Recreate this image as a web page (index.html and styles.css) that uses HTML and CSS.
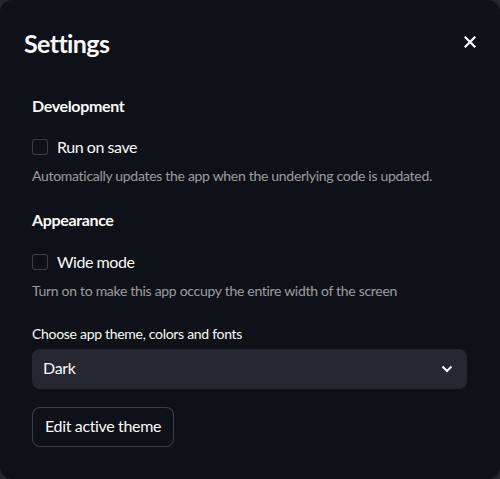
FILE: index.html
```html
<!DOCTYPE html>
<html>
<head>
<meta charset="utf-8">
<link rel="stylesheet" href="styles.css">
</head>
<body>
<div class="dialog">
  <div class="header">
    <h2 class="title">Settings</h2>
    <button class="close" aria-label="Close">
      <svg width="12" height="12" viewBox="0 0 12 12"><path d="M1.5 1.5 L10.5 10.5 M10.5 1.5 L1.5 10.5" stroke="#fafafa" stroke-width="2.2" stroke-linecap="square"/></svg>
    </button>
  </div>
  <div class="content">
    <div class="section-title first">Development</div>
    <label class="check"><span class="box"></span><span>Run on save</span></label>
    <div class="caption">Automatically updates the app when the underlying code is updated.</div>
    <div class="section-title second">Appearance</div>
    <label class="check wide"><span class="box"></span><span>Wide mode</span></label>
    <div class="caption">Turn on to make this app occupy the entire width of the screen</div>
    <div class="field-label">Choose app theme, colors and fonts</div>
    <div class="select">
      <span>Dark</span>
      <svg width="12" height="8" viewBox="0 0 12 8"><path d="M1.5 1.5 L6 6 L10.5 1.5" fill="none" stroke="#fafafa" stroke-width="2"/></svg>
    </div>
    <button class="btn">Edit active theme</button>
  </div>
</div>
</body>
</html>
```
FILE: styles.css
```css
* { box-sizing: border-box; }
html, body { margin: 0; padding: 0; }
body {
  background: #26272c;
  width: 500px;
  height: 479px;
  font-family: Lato, "Source Sans Pro", "Noto Sans", sans-serif;
  color: #fafafa;
}
.dialog {
  width: 500px;
  height: 479px;
  background: #0e1117;
  border-radius: 12px;
  overflow: hidden;
}
.header {
  display: flex;
  align-items: center;
  justify-content: space-between;
  padding: 24px 24px 0 24px;
}
.title {
  margin: 0;
  font-size: 25px;
  font-weight: 700;
  line-height: 38px;
  letter-spacing: -0.6px;
}
.close {
  background: none;
  border: none;
  padding: 0;
  width: 24px;
  height: 24px;
  display: flex;
  align-items: center;
  justify-content: center;
  margin-right: -6px;
  margin-top: -2px;
}
.content {
  padding: 0 33px 0 32px;
  display: flex;
  flex-direction: column;
  align-items: flex-start;
}
.section-title {
  font-size: 16px;
  font-weight: 700;
  line-height: 24px;
  letter-spacing: -0.35px;
}
.section-title.first { margin-top: 32px; }
.section-title.second { margin-top: 22px; }
.check {
  display: flex;
  align-items: center;
  gap: 9px;
  font-size: 16px;
  line-height: 24px;
  letter-spacing: -0.45px;
  margin-top: 17px;
}
.check.wide { margin-top: 18px; }
.box {
  width: 16px;
  height: 16px;
  border: 1px solid rgba(250, 250, 250, 0.2);
  border-radius: 3px;
}
.caption {
  font-size: 14px;
  line-height: 20px;
  letter-spacing: -0.3px;
  color: rgba(250, 250, 250, 0.6);
  margin-top: 7px;
}
.field-label {
  font-size: 14px;
  line-height: 20px;
  letter-spacing: -0.3px;
  margin-top: 23px;
}
.select {
  margin-top: 5px;
  width: 100%;
  height: 40px;
  background: #262730;
  border-radius: 8px;
  display: flex;
  align-items: center;
  justify-content: space-between;
  padding: 0 14px 0 11px;
  font-size: 16px;
  letter-spacing: -0.3px;
}
.select span { margin-top: -3px; }
.btn {
  margin-top: 18px;
  height: 40px;
  padding: 0 12px 3px 12px;
  background: #0e1117;
  color: #fafafa;
  border: 1px solid rgba(250, 250, 250, 0.2);
  border-radius: 8px;
  font-family: inherit;
  font-size: 16px;
  letter-spacing: -0.35px;
}
```
